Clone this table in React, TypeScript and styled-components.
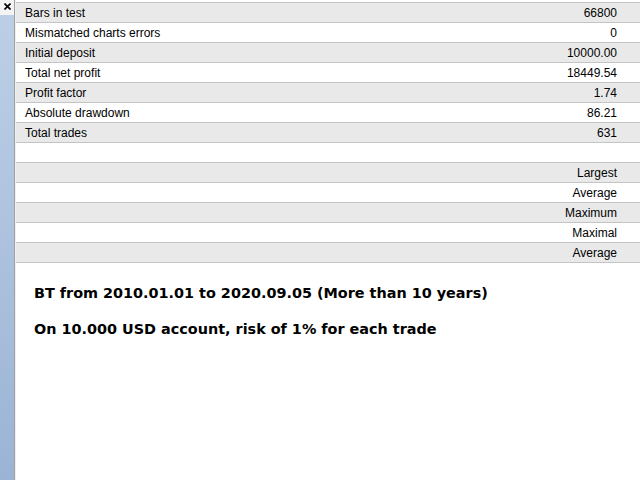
import React from 'react'
import styled, { createGlobalStyle } from 'styled-components'

const GlobalStyle = createGlobalStyle`
  html, body {
    margin: 0;
    padding: 0;
    background: #ffffff;
  }
  body {
    font-family: "Liberation Sans", Arial, sans-serif;
  }
`

const stats = [
  { label: 'Bars in test', value: '66800' },
  { label: 'Mismatched charts errors', value: '0' },
  { label: 'Initial deposit', value: '10000.00' },
  { label: 'Total net profit', value: '18449.54' },
  { label: 'Profit factor', value: '1.74' },
  { label: 'Absolute drawdown', value: '86.21' },
  { label: 'Total trades', value: '631' },
  { label: '', value: '' },
  { label: '', value: 'Largest' },
  { label: '', value: 'Average' },
  { label: '', value: 'Maximum' },
  { label: '', value: 'Maximal' },
  { label: '', value: 'Average' },
]

export default function App() {
  return (
    <>
      <GlobalStyle />
      <Page>
        <Sidebar>
          <CloseBox>
            <svg width="7" height="7" viewBox="0 0 7 7">
              <path d="M0.5 0.5 L6.5 6.5 M6.5 0.5 L0.5 6.5" stroke="#000" strokeWidth="1.6" />
            </svg>
          </CloseBox>
          <SideBar />
        </Sidebar>
        <Content>
          <Table>
            {stats.map((s, i) => (
              <Row key={i} $shaded={i % 2 === 0}>
                <Label>{s.label}</Label>
                <Value>{s.value}</Value>
              </Row>
            ))}
          </Table>
          <Notes>
            <Note>BT from 2010.01.01 to 2020.09.05 (More than 10 years)</Note>
            <Note>On 10.000 USD account, risk of 1% for each trade</Note>
          </Notes>
        </Content>
      </Page>
    </>
  )
}

const Page = styled.div`
  display: flex;
  width: 640px;
  height: 480px;
  overflow: hidden;
`

const Sidebar = styled.div`
  display: flex;
  flex-direction: column;
  width: 14px;
  border-right: 1px solid #a0a0a0;
  flex-shrink: 0;
`

const CloseBox = styled.div`
  height: 15px;
  display: flex;
  align-items: flex-start;
  justify-content: center;
  padding-top: 3px;
  box-sizing: border-box;
  background: #f4f4f4;
`

const SideBar = styled.div`
  flex: 1;
  background: linear-gradient(to bottom, #bccfe6, #9bb4d5);
`

const Content = styled.div`
  flex: 1;
  display: flex;
  flex-direction: column;
  padding-top: 2px;
  border-left: 1px solid #f0f0f0;
`

const Table = styled.div`
  border-top: 1px solid #c4c4c4;
`

const Row = styled.div<{ $shaded: boolean }>`
  display: flex;
  justify-content: space-between;
  align-items: center;
  height: 19px;
  border-bottom: 1px solid #c4c4c4;
  background: ${(p) => (p.$shaded ? '#e9e9e9' : '#ffffff')};
  padding: 0 23px 0 9px;
  font-size: 12px;
  color: #000;
`

const Label = styled.span`
  white-space: nowrap;
`

const Value = styled.span`
  white-space: nowrap;
`

const Notes = styled.div`
  display: flex;
  flex-direction: column;
  gap: 18px;
  padding: 21px 0 0 18px;
`

const Note = styled.div`
  font-family: "DejaVu Sans", Verdana, sans-serif;
  font-weight: bold;
  font-size: 14.4px;
  line-height: 18px;
  color: #000;
`
